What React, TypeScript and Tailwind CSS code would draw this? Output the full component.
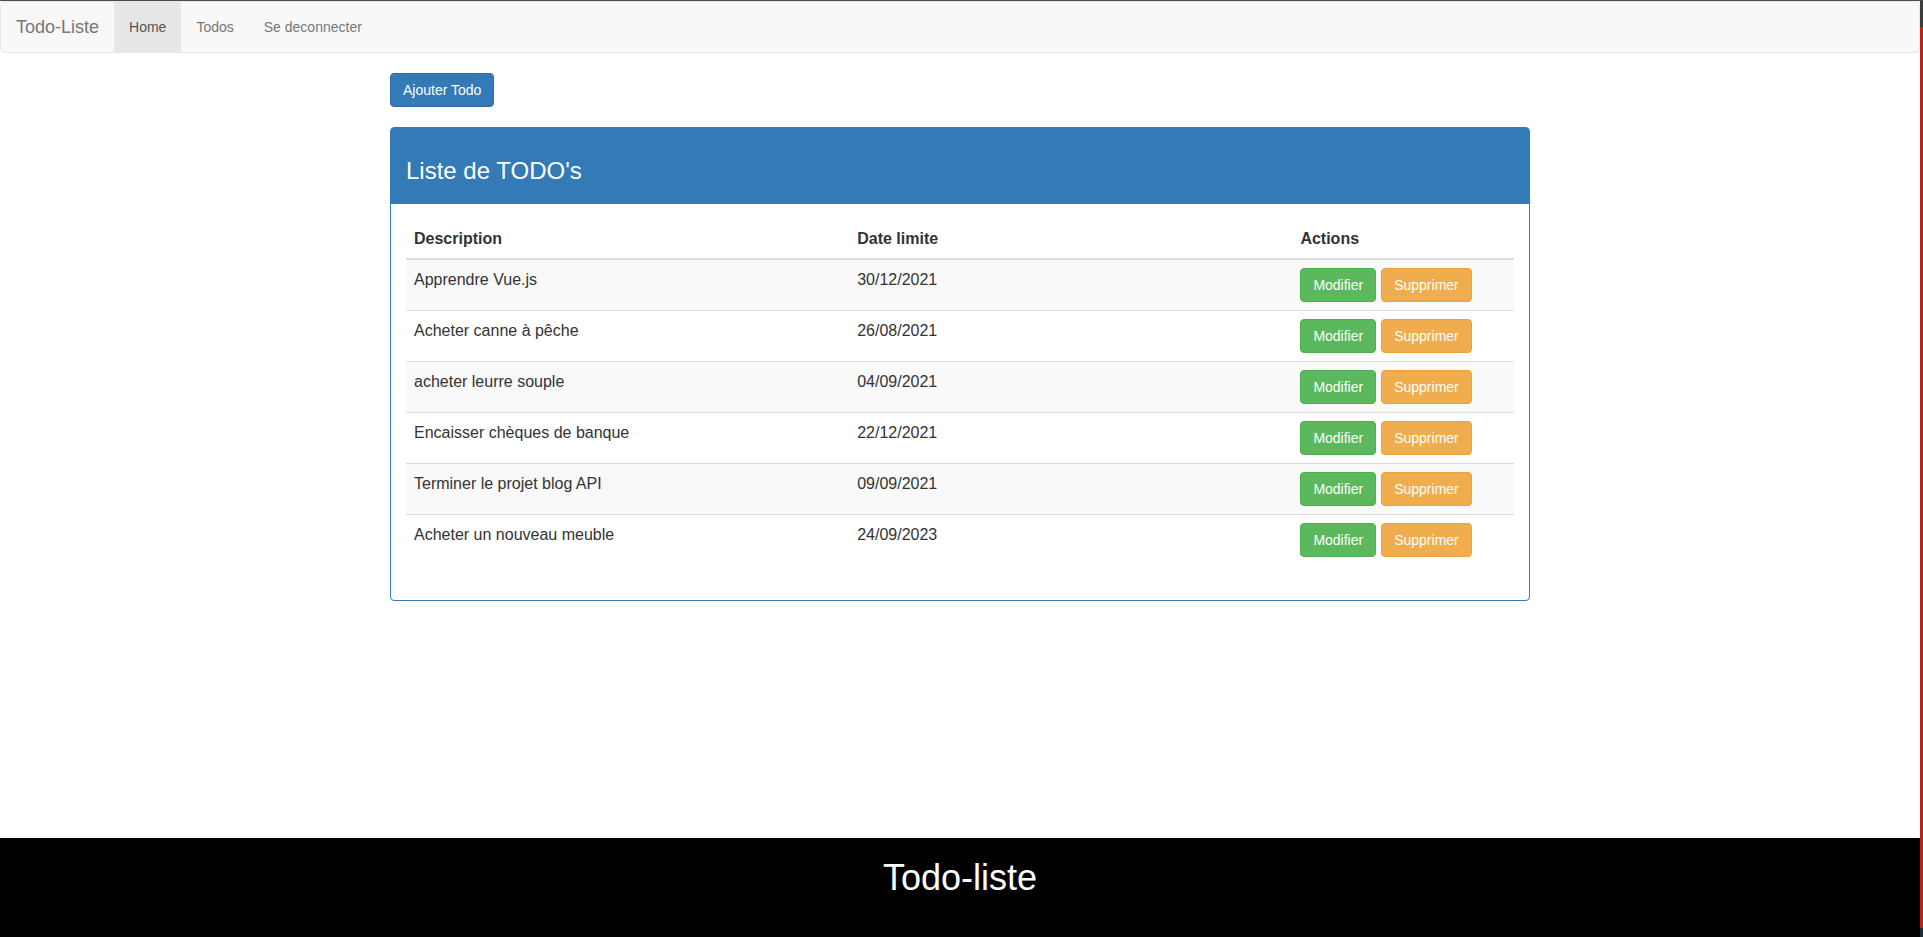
import { useState } from "react";

interface Todo {
  id: number;
  description: string;
  dateLimite: string;
}

const initialTodos: Todo[] = [
  { id: 1, description: "Apprendre Vue.js", dateLimite: "30/12/2021" },
  { id: 2, description: "Acheter canne à pêche", dateLimite: "26/08/2021" },
  { id: 3, description: "acheter leurre souple", dateLimite: "04/09/2021" },
  { id: 4, description: "Encaisser chèques de banque", dateLimite: "22/12/2021" },
  { id: 5, description: "Terminer le projet blog API", dateLimite: "09/09/2021" },
  { id: 6, description: "Acheter un nouveau meuble", dateLimite: "24/09/2023" }
];

const navLinks = [
  { label: "Home", active: true },
  { label: "Todos", active: false },
  { label: "Se deconnecter", active: false }
];

const Navbar = () => (
  <nav className="flex h-[52px] rounded-[4px] border border-[#e7e7e7] bg-[#f8f8f8]">
    <a className="px-[15px] py-[15px] text-[18px] leading-[20px] text-[#777]">Todo-Liste</a>
    <ul className="flex">
      {navLinks.map((link) => (
        <li key={link.label}>
          <a
            className={
              link.active
                ? "block bg-[#e7e7e7] px-[15px] py-[15px] text-[14px] leading-[20px] text-[#555]"
                : "block px-[15px] py-[15px] text-[14px] leading-[20px] text-[#777]"
            }
          >
            {link.label}
          </a>
        </li>
      ))}
    </ul>
  </nav>
);

const TodoRow = ({ todo, striped }: { todo: Todo; striped: boolean }) => (
  <tr className={striped ? "bg-[#f9f9f9]" : ""}>
    <td className="border-t border-[#ddd] p-2 align-top leading-[23px]">{todo.description}</td>
    <td className="border-t border-[#ddd] p-2 align-top leading-[23px]">{todo.dateLimite}</td>
    <td className="border-t border-[#ddd] p-2 align-top">
      <div className="flex gap-[5px]">
        <button className="rounded-[4px] border border-[#4cae4c] bg-[#5cb85c] px-3 py-[6px] text-[14px] leading-[20px] text-white">
          Modifier
        </button>
        <button className="rounded-[4px] border border-[#eea236] bg-[#f0ad4e] px-3 py-[6px] text-[14px] leading-[20px] text-white">
          Supprimer
        </button>
      </div>
    </td>
  </tr>
);

export default function App() {
  const [todos] = useState<Todo[]>(initialTodos);

  return (
    <div className="flex h-[937px] flex-col bg-white font-['Liberation_Sans',Arial,sans-serif] text-[14px] text-[#333]">
      <div className="h-px bg-[#4a4a4a]" />
      <div className="flex flex-1">
        <div className="flex flex-1 flex-col">
          <Navbar />

          <main className="mx-auto mt-5 w-[1170px] flex-1 px-[15px]">
            <button className="mb-5 rounded-[4px] border border-[#2e6da4] bg-[#337ab7] px-3 py-[6px] text-[14px] leading-[20px] text-white">
              Ajouter Todo
            </button>

            <div className="rounded-[4px] border border-[#337ab7]">
              <div className="rounded-t-[3px] bg-[#337ab7] px-[15px] pt-[30px] pb-5">
                <h3 className="text-[24px] leading-[26px] text-white">Liste de TODO&apos;s</h3>
              </div>
              <div className="p-[15px]">
                <table className="mb-5 w-full border-collapse text-[16px]">
                  <thead>
                    <tr>
                      <th className="w-[40%] border-b-2 border-[#ddd] p-2 text-left leading-[23px] font-bold">
                        Description
                      </th>
                      <th className="w-[40%] border-b-2 border-[#ddd] p-2 text-left leading-[23px] font-bold">
                        Date limite
                      </th>
                      <th className="w-[20%] border-b-2 border-[#ddd] p-2 text-left leading-[23px] font-bold">
                        Actions
                      </th>
                    </tr>
                  </thead>
                  <tbody>
                    {todos.map((todo, index) => (
                      <TodoRow key={todo.id} todo={todo} striped={index % 2 === 0} />
                    ))}
                  </tbody>
                </table>
              </div>
            </div>
          </main>

          <footer className="h-[99px] bg-black pt-5 text-center text-[36px] leading-[40px] text-white">
            Todo-liste
          </footer>
        </div>

        {/* window edge strip from the screenshot */}
        <div className="flex w-[3px] flex-col">
          <div className="h-[26px] bg-[#3c3c3c]" />
          <div className="flex-1 bg-[#b3261e]" />
          <div className="h-[9px] bg-[#1d2b33]" />
        </div>
      </div>
    </div>
  );
}
